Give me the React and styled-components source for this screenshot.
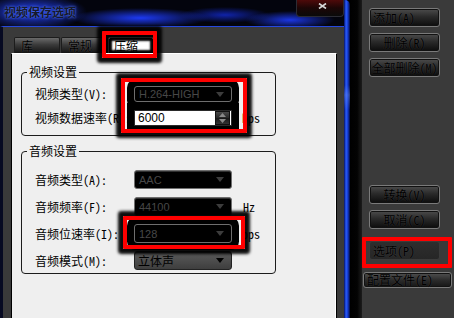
import React from 'react'
import styled, { createGlobalStyle } from 'styled-components'

const FONT = `"Noto Sans Mono CJK SC", "Liberation Mono", "Noto Sans CJK SC", monospace`

const GlobalStyle = createGlobalStyle`
  html, body {
    margin: 0;
    padding: 0;
    background: #000;
  }
`

const Screen = styled.div`
  position: relative;
  display: flex;
  width: 454px;
  height: 318px;
  overflow: hidden;
  background: #000;
  font-family: ${FONT};
  font-size: 12px;
`

const Window = styled.div`
  display: flex;
  width: 350px;
  height: 100%;
`

const WindowMain = styled.div`
  display: flex;
  flex-direction: column;
  width: 344px;
`

const TitleBar = styled.div`
  display: flex;
  justify-content: space-between;
  align-items: flex-start;
  height: 26px;
  background:
    radial-gradient(ellipse 55px 18px at 32px 12px, rgba(40, 70, 255, 0.95), transparent),
    radial-gradient(ellipse 70px 10px at 140px 18px, rgba(30, 60, 255, 0.95), transparent),
    radial-gradient(ellipse 45px 9px at 290px 20px, rgba(30, 60, 250, 0.9), transparent),
    radial-gradient(ellipse 45px 8px at 225px 15px, rgba(20, 45, 220, 0.75), transparent),
    #03040d;
`

const Title = styled.div`
  padding: 5px 0 0 4px;
  color: #161a2c;
  font-family: "Noto Sans CJK SC", sans-serif;
  font-size: 12px;
  line-height: 14px;
  font-weight: bold;
  text-shadow: 0 0 2px #5577ff, 0 0 4px #2845d0;
`

const CloseButton = styled.div`
  display: flex;
  justify-content: center;
  width: 48px;
  height: 17px;
  box-sizing: border-box;
  padding: 3px 0 0 4px;
  border: 1px solid #2c2c34;
  border-top: none;
  border-radius: 0 0 4px 4px;
  background: linear-gradient(#4e0a0a, #1c0606 50%, #0a0a0a);
`

const WindowBody = styled.div`
  flex: 1;
  display: flex;
  flex-direction: column;
  background: #3a3a3a;
  border-top: 1px solid #2648e0;
  border-left: 3px solid #070a22;
  padding: 10px 7px 0 8px;
`

const FrameEdge = styled.div`
  width: 6px;
  border-radius: 0 5px 0 0;
  background:
    linear-gradient(180deg, transparent 85px, rgba(120, 160, 255, 0.35) 95px, transparent 110px),
    linear-gradient(90deg, #041060, #2a5cff 35%, #1438c8 65%, #020830);
`

const TabRow = styled.div`
  display: flex;
  gap: 1px;
  height: 16px;
  padding-left: 3px;
`

const Tab = styled.div`
  width: 46px;
  box-sizing: border-box;
  padding: 1px 0 0 ${p => (p.$active ? 5 : 6)}px;
  border: 1px solid #1c1c1c;
  border-bottom: none;
  border-radius: 2px 2px 0 0;
  line-height: 14px;
  background: ${p => (p.$active ? '#fff' : 'linear-gradient(#6a6a6a, #3a3a3a 45%, #141414)')};
  color: #000;
  text-shadow: ${p => (p.$active ? 'none' : '0 0 1px rgba(140, 140, 140, 0.6)')};
  box-shadow: ${p => (p.$active ? 'inset 0 0 2px 3px #000, 0 0 0 5px #000' : 'none')};
`

const Panel = styled.div`
  flex: 1;
  display: flex;
  flex-direction: column;
  gap: 8px;
  padding: 11px 0 0 9px;
  background: #efefef;
  border-top: 1px solid #fff;
  border-left: 1px solid #000;
  border-right: 1px solid #000;
  box-shadow: inset -1px 0 #fff;
`

const Group = styled.fieldset`
  width: 255px;
  box-sizing: border-box;
  margin: 0;
  padding: 0;
  border: 1px solid #1c1c1c;
  border-radius: 4px;
`

const Legend = styled.legend`
  margin-left: 5px;
  padding: 0 2px;
  line-height: 14px;
  color: #000;
`

const Rows = styled.div`
  display: flex;
  flex-direction: column;
  gap: 8px;
  padding: ${p => p.$top}px 0 ${p => p.$bottom}px 13px;
`

const Row = styled.div`
  display: grid;
  grid-template-columns: 99px 98px auto;
  align-items: center;
  height: ${p => p.$h}px;
`

const Label = styled.span`
  white-space: nowrap;
  color: #000;
  line-height: 14px;
`

const Select = styled.div`
  display: flex;
  align-items: center;
  justify-content: space-between;
  height: 100%;
  box-sizing: border-box;
  padding: 0 7px 0 4px;
  border: 1px solid #6e6e6e;
  border-radius: 3px;
  background: #000;
  color: #484848;
  font-family: "Liberation Sans", sans-serif;
  font-size: 11px;
  box-shadow: ${p => (p.$dim ? '0 0 0 7px #000' : 'inset 0 1px #303030')};
`

const LightSelect = styled(Select)`
  padding-left: 3px;
  border-color: #222;
  background: linear-gradient(#5c5c5c, #3e3e3e);
  color: #000;
  font-family: ${FONT};
  font-size: 12px;
`

const NumberField = styled.div`
  display: flex;
  align-items: center;
  height: 100%;
  box-sizing: border-box;
  padding: 0 1px 0 3px;
  background: #fff;
  border: 1px solid #2a2a2a;
  color: #000;
  font-family: "Liberation Sans", sans-serif;
  font-size: 12px;
  box-shadow: 0 0 0 7px #000;
`

const Spinner = styled.div`
  display: flex;
  flex-direction: column;
  justify-content: space-around;
  align-items: center;
  margin-left: auto;
  width: 15px;
  height: 14px;
  background: linear-gradient(#4a4a4a, #262626 50%, #161616 50%, #333);
  border: 1px solid #111;
  box-sizing: border-box;
`

const Unit = styled.span`
  margin-left: ${p => p.$gap}px;
  color: #000;
  line-height: 14px;
`

const Gutter = styled.div`
  width: 12px;
  background: linear-gradient(90deg, #000, #030303 60%, #1c1c1c);
`

const SidePanel = styled.div`
  flex: 1;
  display: flex;
  flex-direction: column;
  padding: 8px 0 0 7px;
  background: #3a3a3a;
`

const ButtonStack = styled.div`
  display: flex;
  flex-direction: column;
  gap: 6px;
  margin-top: ${p => p.$mt || 0}px;
`

const SideButton = styled.div`
  display: flex;
  align-items: center;
  justify-content: ${p => (p.$left ? 'flex-start' : 'center')};
  width: ${p => (p.$wide ? 89 : 71)}px;
  height: ${p => p.$h || 19}px;
  box-sizing: border-box;
  margin-top: ${p => p.$mt || 0}px;
  margin-left: ${p => (p.$wide ? -6 : 0)}px;
  padding-left: ${p => (p.$left ? 3 : 0)}px;
  border: 1px solid ${p => (p.$pressed ? '#3c3c3c' : '#7a7a7a')};
  border-radius: 3px;
  background: ${p =>
    p.$pressed
      ? 'linear-gradient(#2e2e2e, #262626)'
      : p.$wide
        ? 'linear-gradient(#505050, #2c2c2c 50%, #161616)'
        : 'linear-gradient(#4c4c4c, #2a2a2a 45%, #0c0c0c)'};
  box-shadow: ${p => (p.$pressed ? 'none' : 'inset 0 0 0 1px #111')};
  color: #000;
  white-space: nowrap;
  line-height: 14px;
  text-shadow: 0 0 1px rgba(110, 110, 110, 0.5);
`

const Highlight = styled.div`
  position: absolute;
  left: ${p => p.$x}px;
  top: ${p => p.$y}px;
  width: ${p => p.$w}px;
  height: ${p => p.$h}px;
  box-sizing: border-box;
  border: 4px solid #ff0000;
  border-radius: 1px;
  box-shadow: ${p => (p.$glow ? '0 0 3px 5px rgba(0, 0, 0, 0.95)' : 'none')};
  pointer-events: none;
`

const Arrow = ({ color }) => (
  <svg width="8" height="5" viewBox="0 0 8 5">
    <polygon points="0,0 8,0 4,5" fill={color} />
  </svg>
)

const Cross = () => (
  <svg width="9" height="6" viewBox="0 0 9 6">
    <path d="M1 0.5 L8 5.5 M8 0.5 L1 5.5" stroke="#d8d8d8" strokeWidth="1.6" />
  </svg>
)

const SpinArrow = ({ up }) => (
  <svg width="7" height="4" viewBox="0 0 7 4">
    <polygon points={up ? '0,4 7,4 3.5,0' : '0,0 7,0 3.5,4'} fill="#8a8a8a" />
  </svg>
)

function Dropdown({ value, light, dim }) {
  const Box = light ? LightSelect : Select
  return (
    <Box $dim={dim}>
      <span>{value}</span>
      <Arrow color={light ? '#000' : '#3c3c3c'} />
    </Box>
  )
}

export default function App() {
  return (
    <Screen>
      <GlobalStyle />
      <Window>
        <WindowMain>
          <TitleBar>
            <Title>视频保存选项</Title>
            <CloseButton>
              <Cross />
            </CloseButton>
          </TitleBar>
          <WindowBody>
            <TabRow>
              <Tab>库</Tab>
              <Tab>常规</Tab>
              <Tab $active>压缩</Tab>
            </TabRow>
            <Panel>
              <Group>
                <Legend>视频设置</Legend>
                <Rows $top={7} $bottom={9}>
                  <Row $h={16}>
                    <Label>视频类型(V):</Label>
                    <Dropdown value="H.264-HIGH" dim />
                  </Row>
                  <Row $h={16}>
                    <Label>视频数据速率(R):</Label>
                    <NumberField>
                      6000
                      <Spinner>
                        <SpinArrow up />
                        <SpinArrow />
                      </Spinner>
                    </NumberField>
                    <Unit $gap={10}>bps</Unit>
                  </Row>
                </Rows>
              </Group>
              <Group>
                <Legend>音频设置</Legend>
                <Rows $top={12} $bottom={3}>
                  <Row $h={19}>
                    <Label>音频类型(A):</Label>
                    <Dropdown value="AAC" />
                  </Row>
                  <Row $h={19}>
                    <Label>音频频率(F):</Label>
                    <Dropdown value="44100" />
                    <Unit $gap={11}>Hz</Unit>
                  </Row>
                  <Row $h={19}>
                    <Label>音频位速率(I):</Label>
                    <Dropdown value="128" dim />
                    <Unit $gap={10}>bps</Unit>
                  </Row>
                  <Row $h={19}>
                    <Label>音频模式(M):</Label>
                    <Dropdown value="立体声" light />
                  </Row>
                </Rows>
              </Group>
            </Panel>
          </WindowBody>
        </WindowMain>
        <FrameEdge />
      </Window>
      <Gutter />
      <SidePanel>
        <ButtonStack>
          <SideButton $left>添加(A)</SideButton>
          <SideButton>删除(R)</SideButton>
          <SideButton>全部删除(M)</SideButton>
        </ButtonStack>
        <ButtonStack $mt={108}>
          <SideButton>转换(V)</SideButton>
          <SideButton>取消(C)</SideButton>
          <SideButton $left $pressed $mt={6}>选项(P)</SideButton>
          <SideButton $left $wide $h={16} $mt={6}>配置文件(E)</SideButton>
        </ButtonStack>
      </SidePanel>

      <Highlight $x={102} $y={31} $w={55} $h={27} $glow />
      <Highlight $x={121} $y={78} $w={126} $h={55} $glow />
      <Highlight $x={123} $y={216} $w={122} $h={33} $glow />
      <Highlight $x={362} $y={237} $w={90} $h={31} />
    </Screen>
  )
}
